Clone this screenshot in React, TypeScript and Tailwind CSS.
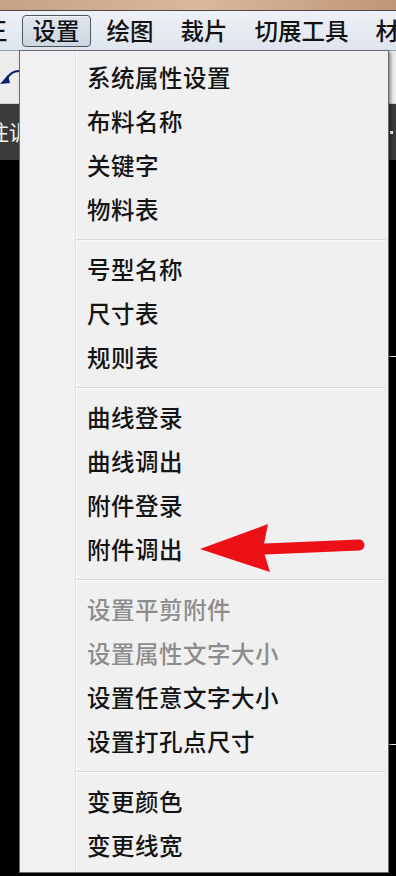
const font = { fontFamily: '"Noto Sans CJK SC", "Noto Sans", sans-serif' }

type Entry = { label: string; disabled?: boolean } | 'sep'

const entries: Entry[] = [
  { label: '系统属性设置' },
  { label: '布料名称' },
  { label: '关键字' },
  { label: '物料表' },
  'sep',
  { label: '号型名称' },
  { label: '尺寸表' },
  { label: '规则表' },
  'sep',
  { label: '曲线登录' },
  { label: '曲线调出' },
  { label: '附件登录' },
  { label: '附件调出' },
  'sep',
  { label: '设置平剪附件', disabled: true },
  { label: '设置属性文字大小', disabled: true },
  { label: '设置任意文字大小' },
  { label: '设置打孔点尺寸' },
  'sep',
  { label: '变更颜色' },
  { label: '变更线宽' },
]

const menus = ['绘图', '裁片', '切展工具', '材']

function Dropdown() {
  return (
    <div className="absolute left-[19px] top-[50px] flex h-[823px] w-[370px] border border-[#6a6a6a] bg-[#f0f0f1] shadow-[2px_2px_3px_rgba(0,0,0,0.4)]">
      {/* icon gutter */}
      <div className="w-[56px] shrink-0 border-r border-r-[#e2e2e4] bg-[#f1f1f3] shadow-[1px_0_0_#fbfbfb]" />
      <div className="flex flex-1 flex-col pt-[5px] pr-[2px]">
        {entries.map((e, i) =>
          e === 'sep' ? (
            <div key={i} className="flex h-[16px] items-center">
              <div className="h-[2px] w-full border-t border-t-[#d9d9db] border-b border-b-[#fafafa]" />
            </div>
          ) : (
            <div
              key={i}
              className={
                'flex h-[44px] items-center whitespace-nowrap pl-[11px] text-[23.5px] font-medium leading-none tracking-[0.5px] ' +
                (e.disabled ? 'text-[#8c8c8c]' : 'text-[#141414]')
              }
            >
              {e.label}
            </div>
          ),
        )}
      </div>
    </div>
  )
}

function RedArrow() {
  return (
    <svg className="absolute left-[195px] top-[518px]" width="172" height="60" viewBox="0 0 172 60">
      <path d="M70 31 L164 27" stroke="#ec1116" strokeWidth="11" strokeLinecap="round" fill="none" />
      <path d="M5 31 L73 6 L68 31 L75 54 Z" fill="#ec1116" />
    </svg>
  )
}

export default function App() {
  return (
    <div className="relative flex h-[876px] w-[396px] flex-col overflow-hidden bg-black" style={font}>
      {/* window title strip */}
      <div className="h-[10px] shrink-0 bg-gradient-to-r from-[#c7a183] via-[#d9b89d] to-[#c09677]" />
      <div className="h-px shrink-0 bg-[#4a4a4a]" />

      {/* menu bar */}
      <div className="flex h-[39px] shrink-0 items-center whitespace-nowrap bg-gradient-to-b from-[#eef1f6] to-[#dfe5ed] text-[23.5px] font-medium leading-none text-[#121212]">
        <span className="ml-[-16px] mr-[14px] shrink-0">王</span>
        <span className="flex h-[32px] shrink-0 items-center rounded-[4px] border border-[#4d5560] bg-gradient-to-b from-[#dfe6ef] to-[#cdd6e2] px-[10px] shadow-[inset_0_1px_0_#f4f7fa]">
          设置
        </span>
        {menus.map((m) => (
          <span key={m} className="ml-[5px] shrink-0 px-[11px]">
            {m}
          </span>
        ))}
      </div>

      {/* toolbar */}
      <div className="flex h-[53px] shrink-0 border-t border-t-[#9aa3ad] bg-[#ececec]">
        <svg width="20" height="40" viewBox="0 0 20 40" className="mt-[6px]">
          <path d="M19 14 C13 14 10 17 6 22" stroke="#0b1f6e" strokeWidth="2" fill="none" />
          <path d="M0 27 L8 18 L10 26 Z" fill="#0b1f6e" />
        </svg>
      </div>

      {/* dark info row */}
      <div className="flex h-[57px] shrink-0 items-center border-t border-t-[#d0d0d0] bg-[#3b3b3b]">
        <span className="ml-[-12px] whitespace-nowrap text-[21px] text-[#f2f2f2]">注训练</span>
        <span className="ml-auto mr-[3px] h-[3px] w-[3px] bg-white" />
      </div>

      {/* drawing canvas */}
      <div className="relative flex-1 bg-black">
        <div className="absolute left-[389px] top-[196px] h-px w-[7px] bg-[#e8e8e8]" />
        <div className="absolute left-[389px] top-[584px] h-px w-[7px] bg-[#e8e8e8]" />
      </div>

      <Dropdown />
      <RedArrow />
    </div>
  )
}
